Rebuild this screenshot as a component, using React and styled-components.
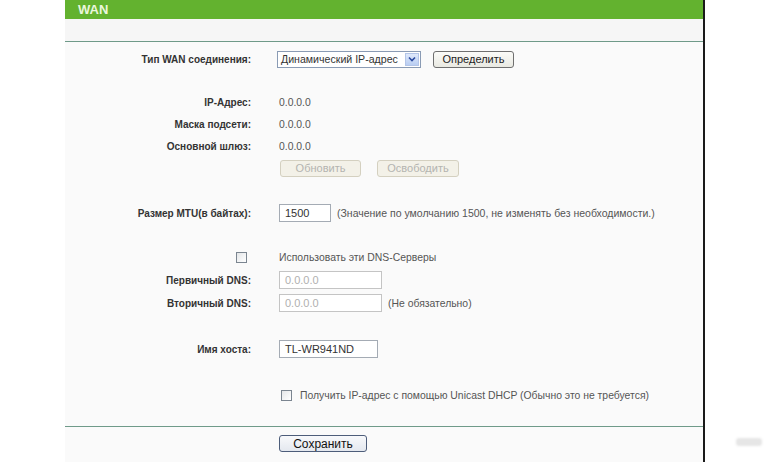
import React from 'react'
import styled, { createGlobalStyle } from 'styled-components'

const Global = createGlobalStyle`
  html, body { margin: 0; padding: 0; background: #fff; }
  body { font-family: "Liberation Sans", Arial, sans-serif; }
`

const Page = styled.div`
  position: relative;
  width: 770px;
  height: 462px;
  overflow: hidden;
  background: #fff;
`

const Panel = styled.div`
  margin-left: 65px;
  width: 638px;
  height: 462px;
  border-right: 2px solid #1a1a1a;
  background: #fafafa;
  display: flex;
  flex-direction: column;
`

const Header = styled.div`
  height: 19px;
  background: #63b22f;
  display: flex;
  align-items: center;
  padding-left: 13px;
  color: #eaf6dc;
  font-weight: bold;
  font-size: 13px;
`

const SubBand = styled.div`
  height: 22px;
  background: #f6f6f6;
  border-bottom: 1px solid #6f9a89;
`

const Divider = styled.div`
  height: 1px;
  background: #6f9a89;
  margin-top: ${p => p.$mt || 0}px;
`

const Content = styled.div`
  display: flex;
  flex-direction: column;
  padding-top: 6px;
`

const Row = styled.div`
  display: grid;
  grid-template-columns: 186px 1fr;
  column-gap: 28px;
  align-items: center;
  height: ${p => p.$h || 22}px;
  margin-top: ${p => p.$mt || 0}px;
`

const Label = styled.div`
  text-align: right;
  font-size: 10px;
  font-weight: bold;
  color: #333;
  display: flex;
  justify-content: flex-end;
  align-items: center;
  white-space: nowrap;
`

const Value = styled.div`
  display: flex;
  align-items: center;
  gap: ${p => p.$gap || 6}px;
  font-size: 10.4px;
  color: #555;
  white-space: nowrap;
`

const Hint = styled.span`
  font-size: 10.5px;
  color: #555;
`

const SelectBox = styled.div`
  margin-left: -2px;
  width: 139px;
  height: 15px;
  border: 1px solid #8a9bb4;
  background: #fff;
  display: flex;
  align-items: center;
  justify-content: space-between;
  font-size: 10.6px;
  color: #333;
  padding-left: 3px;
`

const SelectArrow = styled.div`
  width: 14px;
  height: 13px;
  margin-right: 1px;
  background: linear-gradient(#dfe9fb, #b9cdf2);
  border: 1px solid #b3c5e8;
  box-sizing: border-box;
  display: flex;
  align-items: center;
  justify-content: center;
`

const Button = styled.div`
  box-sizing: border-box;
  width: ${p => p.$w}px;
  height: 17px;
  margin-left: ${p => p.$ml || 0}px;
  border: 1px solid ${p => p.$disabled ? '#d4d0c0' : '#6f6f6f'};
  border-radius: 3px;
  background: ${p => p.$disabled ? '#f3f1e8' : 'linear-gradient(#fbfbf8, #e9e9e2)'};
  color: ${p => p.$disabled ? '#b4b4b0' : '#222'};
  font-size: ${p => p.$fs || 11}px;
  display: flex;
  align-items: center;
  justify-content: center;
`

const Input = styled.div`
  box-sizing: border-box;
  width: ${p => p.$w}px;
  height: 18px;
  border: 1px solid ${p => p.$disabled ? '#c4c4c4' : '#a4abb4'};
  background: #fff;
  color: ${p => p.$disabled ? '#b0b0b0' : '#333'};
  font-size: 11px;
  padding-left: 5px;
  display: flex;
  align-items: center;
`

const Check = styled.div`
  box-sizing: border-box;
  width: 11px;
  height: 11px;
  border: 1px solid #7b8590;
  background: linear-gradient(135deg, #e4e6e8, #fff);
  margin-right: ${p => p.$mr || 0}px;
  margin-left: ${p => p.$ml || 0}px;
`

const Footer = styled.div`
  display: flex;
  padding-left: 214px;
  padding-top: 8px;
`

const SaveButton = styled(Button)`
  border-color: #4d5d7a;
  background: linear-gradient(#f8f9fb, #e4e8ef);
  color: #111;
`

const Watermark = styled.div`
  position: absolute;
  right: 8px;
  bottom: 11px;
  opacity: 0.18;
  filter: blur(0.8px);
`

function Chevron() {
  return (
    <svg width="8" height="6" viewBox="0 0 8 6">
      <path d="M1 1.5 L4 4.5 L7 1.5" fill="none" stroke="#2a4aa0" strokeWidth="1.6" />
    </svg>
  )
}

export default function App() {
  return (
    <Page>
      <Global />
      <Panel>
        <Header>WAN</Header>
        <SubBand />
        <Content>
          <Row $mt={0}>
            <Label>Тип WAN соединения:</Label>
            <Value $gap={12}>
              <SelectBox>
                <span>Динамический IP-адрес</span>
                <SelectArrow><Chevron /></SelectArrow>
              </SelectBox>
              <Button $w={81}>Определить</Button>
            </Value>
          </Row>

          <Row $mt={21}>
            <Label>IP-Адрес:</Label>
            <Value>0.0.0.0</Value>
          </Row>
          <Row>
            <Label>Маска подсети:</Label>
            <Value>0.0.0.0</Value>
          </Row>
          <Row>
            <Label>Основной шлюз:</Label>
            <Value>0.0.0.0</Value>
          </Row>
          <Row>
            <Label />
            <Value $gap={16}>
              <Button $w={81} $ml={1} $disabled>Обновить</Button>
              <Button $w={82} $disabled>Освободить</Button>
            </Value>
          </Row>

          <Row $mt={23}>
            <Label>Размер MTU(в байтах):</Label>
            <Value>
              <Input $w={52}>1500</Input>
              <Hint>(Значение по умолчанию 1500, не изменять без необходимости.)</Hint>
            </Value>
          </Row>

          <Row $mt={22}>
            <Label><Check $mr={4} /></Label>
            <Value>Использовать эти DNS-Серверы</Value>
          </Row>
          <Row $mt={1}>
            <Label>Первичный DNS:</Label>
            <Value><Input $w={103} $disabled>0.0.0.0</Input></Value>
          </Row>
          <Row $mt={1}>
            <Label>Вторичный DNS:</Label>
            <Value>
              <Input $w={103} $disabled>0.0.0.0</Input>
              <span>(Не обязательно)</span>
            </Value>
          </Row>

          <Row $mt={24}>
            <Label>Имя хоста:</Label>
            <Value><Input $w={99}>TL-WR941ND</Input></Value>
          </Row>

          <Row $mt={24}>
            <Label />
            <Value $gap={8}>
              <Check $ml={2} />
              <span>Получить IP-адрес с помощью Unicast DHCP (Обычно это не требуется)</span>
            </Value>
          </Row>

          <Divider $mt={20} />
          <Footer>
            <SaveButton $w={88} $fs={12}>Сохранить</SaveButton>
          </Footer>
        </Content>
      </Panel>
      <Watermark>
        <svg width="26" height="10" viewBox="0 0 26 10">
          <rect x="0" y="1" width="26" height="8" rx="3" fill="#777" />
        </svg>
      </Watermark>
    </Page>
  )
}
